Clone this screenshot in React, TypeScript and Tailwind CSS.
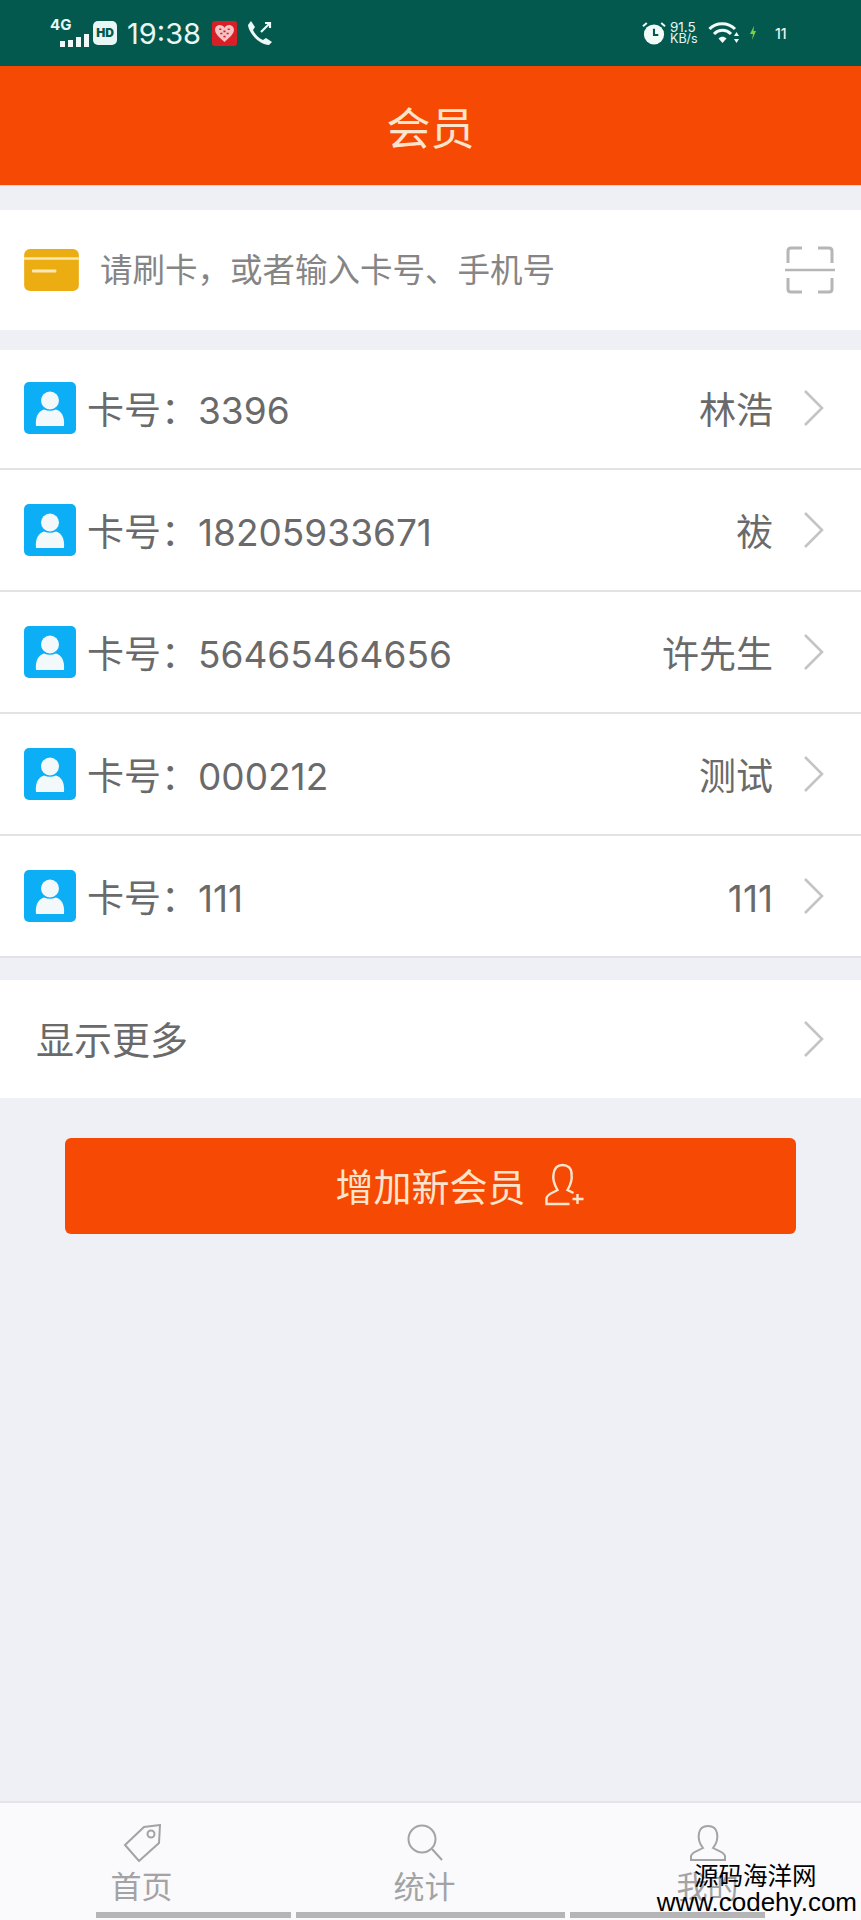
import type { ReactNode } from "react";

const font = { fontFamily: '"Inter", "Noto Sans CJK SC", "Noto Sans", sans-serif' };

function Chevron() {
  return (
    <svg width="24" height="38" viewBox="0 0 24 38" fill="none" className="shrink-0">
      <path d="M3 2 L20 19 L3 36" stroke="#c4c4c6" strokeWidth="2.6" />
    </svg>
  );
}

function Avatar() {
  return (
    <div className="w-[52px] h-[52px] rounded-[5px] bg-[#0caff5] flex items-center justify-center shrink-0">
      <svg width="30" height="35" viewBox="0 0 30 35">
        <circle cx="15" cy="9.500" r="9" fill="#f3f9fb" />
        <path d="M1 35 C0 25 4 20 9 18.500 Q15 21 21 18.500 C26 20 30 25 29 35 Z" fill="#f3f9fb" />
      </svg>
    </div>
  );
}

function Row({ no, name, first }: { no: string; name: string; first?: boolean }) {
  return (
    <div
      className={
        first
          ? "h-[120px] pb-[2px] flex items-center pl-[24px] pr-[35px] bg-white border-b-2 border-[#e3e3e5]"
          : "h-[122px] flex items-center pl-[24px] pr-[35px] bg-white border-b-2 border-[#e3e3e5]"
      }
    >
      <Avatar />
      <div className="ml-[11px] pt-[5px] text-[37px] text-[#6a6a6a] flex-1">卡号：{no}</div>
      <div className="pt-[5px] text-[37px] text-[#6a6a6a] mr-[29px]">{name}</div>
      <Chevron />
    </div>
  );
}

function Tab({ label, children }: { label: string; children: ReactNode }) {
  return (
    <div className="flex-1 flex flex-col items-center pt-[21px]">
      {children}
      <span className="text-[31px] leading-[40px] mt-[5px] text-[#a3a3a5]">{label}</span>
    </div>
  );
}

export default function App() {
  return (
    <div style={font} className="relative w-[861px] h-[1920px] bg-[#eef0f6] flex flex-col overflow-hidden">
      {/* status bar */}
      <div className="h-[66px] bg-[#03594e] flex items-center pl-[50px] text-[#e9f6f3] shrink-0">
        <div className="relative w-[39px] h-[28px] mr-[4px]">
          <span className="absolute left-0 -top-[3px] text-[15px] font-bold leading-[18px]">4G</span>
          <div className="absolute left-[10px] bottom-0 flex items-end gap-[3px]">
            <div className="w-[5px] h-[6px] bg-[#f1faf8]" />
            <div className="w-[5px] h-[7px] bg-[#f1faf8]" />
            <div className="w-[5px] h-[10px] bg-[#f1faf8]" />
            <div className="w-[5px] h-[13px] bg-[#f1faf8]" />
          </div>
        </div>
        <div className="w-[24px] h-[24px] rounded-[5px] bg-[#e8f6f4] text-[#03594e] text-[12px] font-black flex items-center justify-center leading-none">HD</div>
        <span className="ml-[10px] text-[29px] leading-none">19:38</span>
        <div className="ml-[11px] w-[25px] h-[25px] rounded-[3px] bg-[#d81e26] flex items-center justify-center">
          <svg width="21" height="19" viewBox="0 0 20 18">
            <path d="M10 17 C4 12 1 9 1 5.500 C1 2.500 3.500 1 5.500 1 C7.500 1 9 2 10 3.500 C11 2 12.500 1 14.500 1 C16.500 1 19 2.500 19 5.500 C19 9 16 12 10 17 Z" fill="#f4c3c3" />
            <path d="M5 5 H7 M9 7 H11 M13 5 H15 M6 9 H8 M12 9 H14 M9 12 H11" stroke="#d81e26" strokeWidth="1.500" />
          </svg>
        </div>
        <svg className="ml-[10px]" width="26" height="26" viewBox="0 0 26 26" fill="none">
          <path d="M4 1 L8 7 L6 10 C8 14 11 18 16 20 L19 18 L25 22 L22 25 C12 25 2 13 1 5 Z" fill="#eef8f6" />
          <path d="M14 12 L23 3 M18 3 H23 V8" stroke="#eef8f6" strokeWidth="2.200" />
        </svg>
        <div className="flex-1" />
        <svg width="24" height="25" viewBox="0 0 25 25">
          <circle cx="12.500" cy="13.500" r="10.500" fill="#f3fbf9" />
          <path d="M12.500 7.500 V14 H17" stroke="#03594e" strokeWidth="2.200" fill="none" />
          <path d="M1 5 L5 1.500 M24 5 L20 1.500" stroke="#f3fbf9" strokeWidth="2" />
        </svg>
        <div className="ml-[4px] w-[29px] flex flex-col items-start leading-[12.500px] text-[13.500px]">
          <span>91.5</span>
          <span className="text-[12.500px]">KB/s</span>
        </div>
        <svg className="ml-[9px]" width="32" height="24" viewBox="0 0 32 24" fill="none">
          <path d="M1.500 8 C8 1 20 1 27 8" stroke="#f3fbf9" strokeWidth="3" />
          <path d="M6 13 C11 8 18 8 23 13" stroke="#f3fbf9" strokeWidth="3" />
          <path d="M10.500 17.500 C13 15 16 15 18.500 17.500 L14.500 22 Z" fill="#f3fbf9" />
          <path d="M28.500 11 L31 15 H26 Z M28.500 22 L31 18 H26 Z" fill="#f3fbf9" />
        </svg>
        <svg className="ml-[9px]" width="8" height="14" viewBox="0 0 8 14">
          <path d="M5 0 L1 8 H4 L3 14 L7 5 H4.500 Z" fill="#7bd23c" />
        </svg>
        <span className="ml-[18px] w-[86px] text-[14px] font-medium">11</span>
      </div>

      {/* header */}
      <div className="h-[120px] pt-[7px] bg-[#f64a04] border-b border-[#fbcfa8] flex items-center justify-center shrink-0">
        <span className="text-[44px] text-[#fde4cd]">会员</span>
      </div>

      {/* search */}
      <div className="mt-[24px] h-[120px] bg-white flex items-center pl-[24px] pr-[26px] shrink-0">
        <svg width="55" height="42" viewBox="0 0 56 43" className="shrink-0">
          <rect width="56" height="43" rx="6" fill="#ecad13" />
          <rect y="8.500" width="56" height="2.500" fill="#fbe9b5" />
          <rect x="8" y="21" width="25" height="3" rx="1" fill="#fbe9b5" />
        </svg>
        <div className="ml-[21px] pt-[3px] flex-1 text-[32.500px] text-[#858585]">请刷卡，或者输入卡号、手机号</div>
        <svg width="50" height="48" viewBox="0 0 50 48" fill="none" stroke="#b6b6b8" strokeWidth="3" strokeLinejoin="round" className="shrink-0">
          <path d="M3 17 V5 Q3 2 6 2 H17 M33 2 H44 Q47 2 47 5 V17 M3 32 V43 Q3 46 6 46 H17 M33 46 H44 Q47 46 47 43 V32" />
          <path d="M0 24 H50" strokeWidth="2.500" />
        </svg>
      </div>

      {/* list */}
      <div className="mt-[20px] flex flex-col shrink-0">
        <Row first no="3396" name="林浩" />
        <Row no="18205933671" name="祓" />
        <Row no="56465464656" name="许先生" />
        <Row no="000212" name="测试" />
        <Row no="111" name="111" />
      </div>

      {/* more */}
      <div className="mt-[22px] h-[118px] bg-white flex items-center pl-[36px] pr-[35px] shrink-0">
        <div className="flex-1 pt-[3px] text-[38px] text-[#6a6a6a]">显示更多</div>
        <Chevron />
      </div>

      {/* button */}
      <div className="relative mt-[40px] mx-[65px] h-[96px] pt-[3px] rounded-[6px] bg-[#f64a04] flex items-center justify-center shrink-0">
        <span className="text-[38px] text-[#fde4cd]">增加新会员</span>
        <svg className="absolute left-[479px] top-[25px]" width="43" height="44" viewBox="0 0 42 44" fill="none" stroke="#fde4cd" strokeWidth="2.400">
          <path d="M25 41 H2 V35 C3 31 8 30 13 27 C10 22 8 17 9 11 C10 4 14 2 18 2 C23 2 27 5 27 11 C28 17 26 22 23 27 C25 28 27 29 29 30" />
          <path d="M33 31 V41 M28 36 H39" />
        </svg>
      </div>

      <div className="flex-1" />

      {/* tab bar */}
      <div className="relative h-[119px] bg-[#fafafd] border-t-2 border-[#e4e4e7] shrink-0">
        <div className="h-[111px] pr-[12px] flex">
          <Tab label="首页">
            <svg width="38" height="38" viewBox="0 0 38 38" fill="none" stroke="#a3a3a5" strokeWidth="2">
              <path d="M2 21 L21 3 L37 1 L36 19 L16 37 Z" />
              <circle cx="28" cy="10" r="3.500" />
            </svg>
          </Tab>
          <Tab label="统计">
            <svg width="38" height="38" viewBox="0 0 38 38" fill="none" stroke="#a3a3a5" strokeWidth="2">
              <circle cx="16" cy="15" r="13.500" />
              <path d="M26 25 L36 36" />
            </svg>
          </Tab>
          <Tab label="我的">
            <svg width="38" height="38" viewBox="0 0 38 38" fill="none" stroke="#a3a3a5" strokeWidth="2">
              <path d="M2 36 V32 C3 28 9 27 14 24 C10 19 9 14 10 9 C11 4 15 2 19 2 C23 2 27 4 28 9 C29 14 28 19 24 24 C29 27 35 28 36 32 V36 Z" />
            </svg>
          </Tab>
        </div>
        <div className="absolute left-[96px] bottom-[2px] flex gap-[5px]">
          <div className="w-[195px] h-[6px] bg-[#b5b5b8]" />
          <div className="w-[269px] h-[6px] bg-[#b5b5b8]" />
          <div className="w-[195px] h-[6px] bg-[#b5b5b8]" />
        </div>
        <div className="absolute right-[4px] bottom-[6px] flex flex-col items-center text-black">
          <span className="text-[24.500px] leading-[27px] -ml-[3px]">源码海洋网</span>
          <span className="text-[26px] leading-[24px]" style={{ fontFamily: '"Liberation Sans", sans-serif' }}>www.codehy.com</span>
        </div>
      </div>
    </div>
  );
}
